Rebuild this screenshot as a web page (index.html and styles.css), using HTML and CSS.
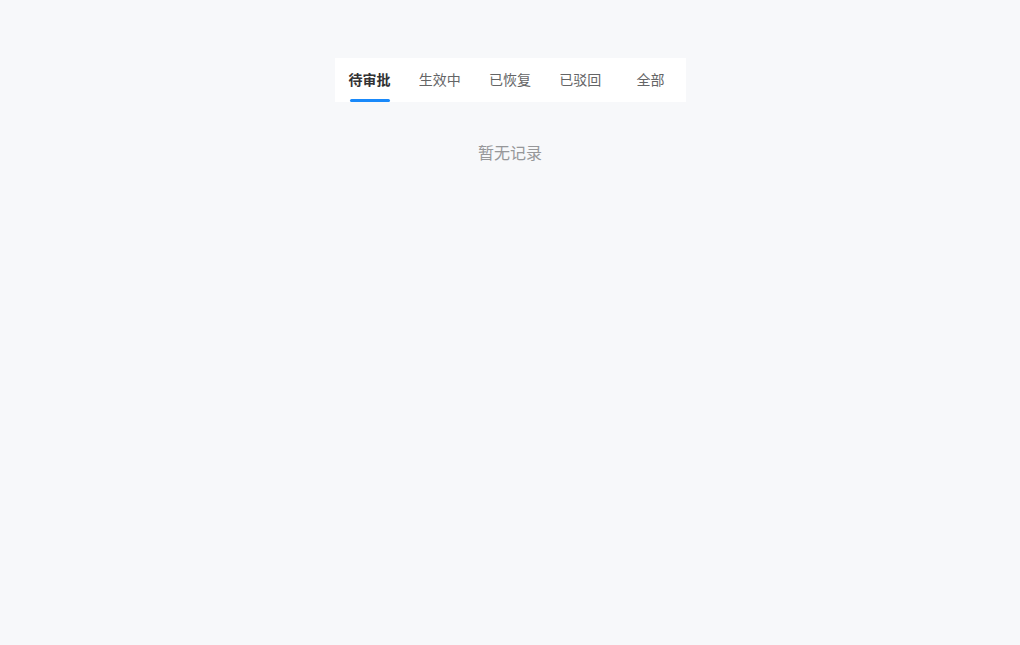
FILE: index.html
```html
<!DOCTYPE html>
<html lang="zh">
<head>
<meta charset="utf-8">
<link rel="stylesheet" href="styles.css">
</head>
<body>
<div class="page">
  <div class="tabs">
    <div class="tab active"><span>待审批</span><i class="line"></i></div>
    <div class="tab"><span>生效中</span></div>
    <div class="tab"><span>已恢复</span></div>
    <div class="tab"><span>已驳回</span></div>
    <div class="tab"><span>全部</span></div>
  </div>
  <div class="empty">暂无记录</div>
</div>
</body>
</html>
```
FILE: styles.css
```css
html, body {
  margin: 0;
  padding: 0;
  background: #f7f8fa;
  font-family: "Noto Sans CJK SC", "Liberation Sans", sans-serif;
}
.page {
  width: 351px;
  margin: 0 auto;
  padding-top: 58px;
}
.tabs {
  display: flex;
  height: 44px;
  background: #fff;
}
.tab {
  flex: 1;
  position: relative;
  display: flex;
  align-items: center;
  justify-content: center;
  padding-bottom: 2px;
  font-size: 14px;
  line-height: 20px;
  color: #646566;
}
.tab.active {
  color: #323233;
  font-weight: 600;
}
.line {
  position: absolute;
  left: 50%;
  bottom: 0;
  width: 40px;
  height: 3px;
  margin-left: -20px;
  border-radius: 3px;
  background: #1989fa;
}
.empty {
  margin-top: 39px;
  text-align: center;
  font-size: 16px;
  line-height: 22px;
  color: #969799;
}
```
